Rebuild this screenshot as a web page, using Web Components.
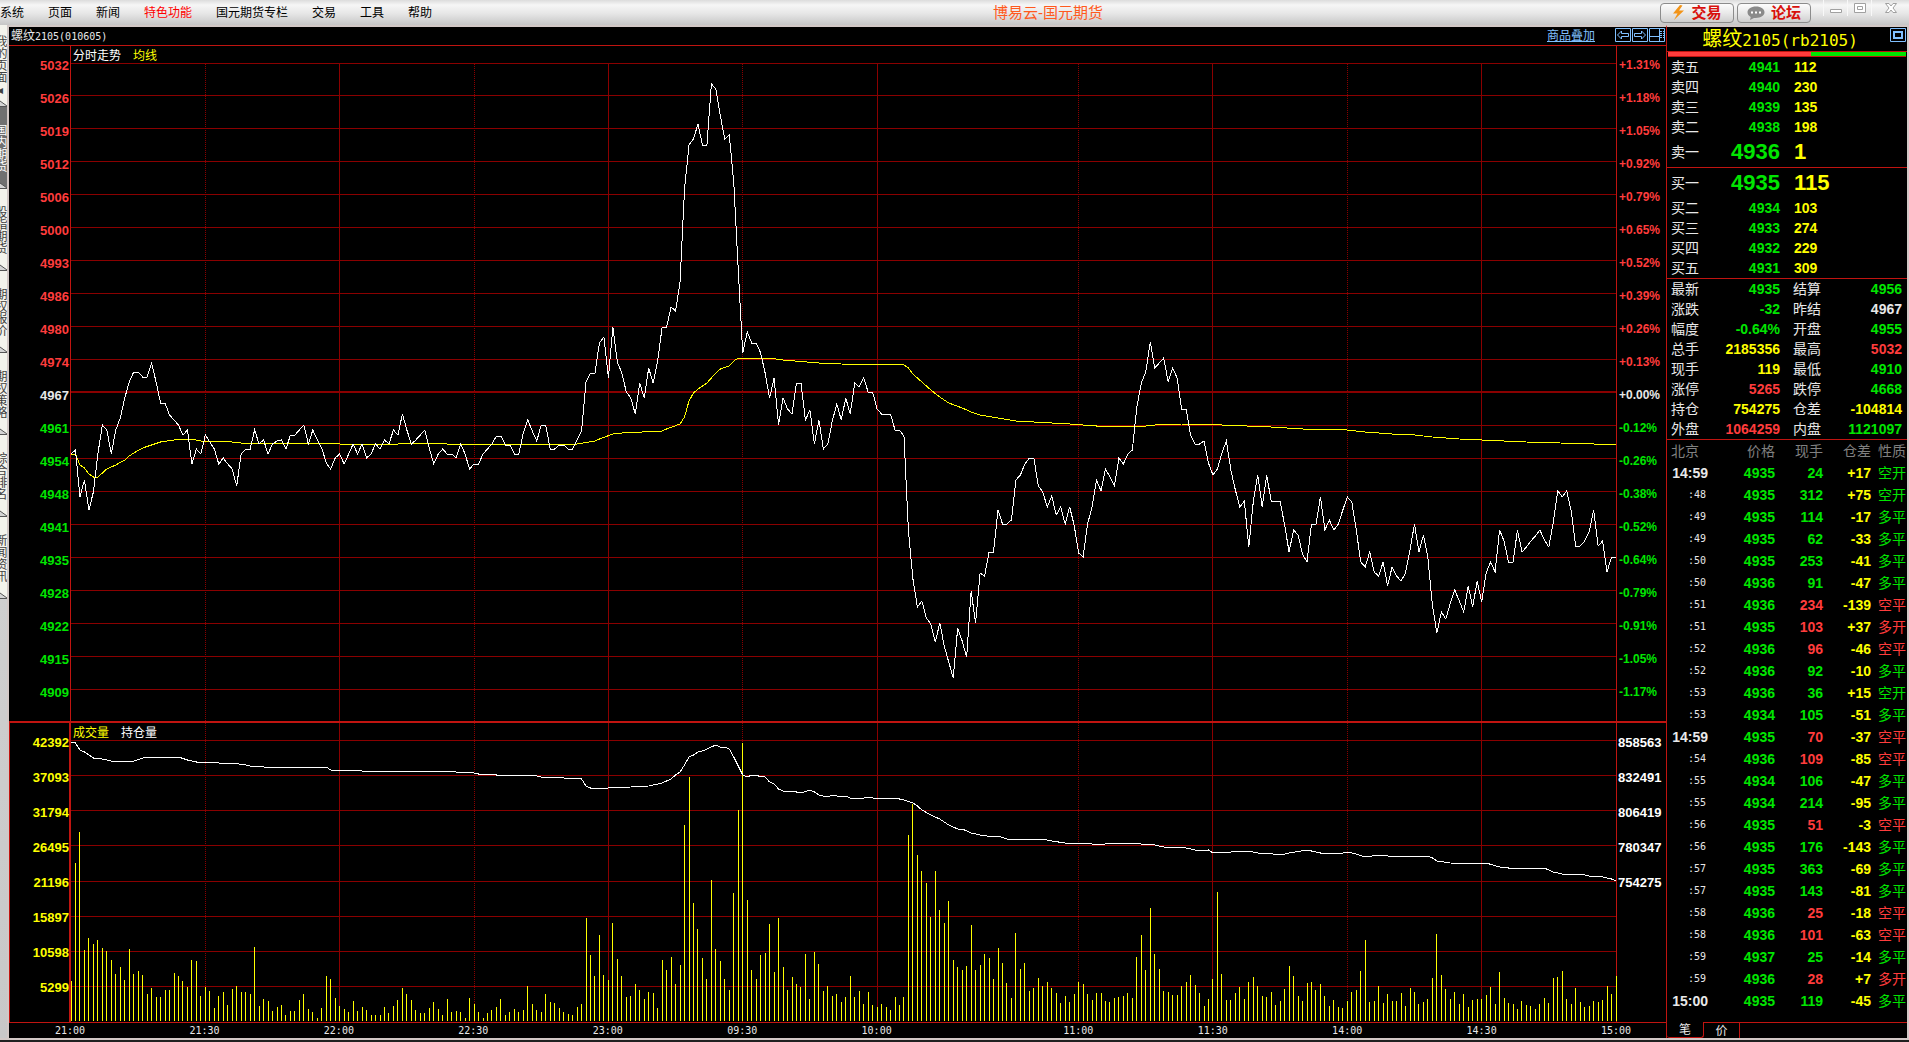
<!DOCTYPE html>
<html lang="zh-CN">
<head>
<meta charset="utf-8">
<title>博易云-国元期货</title>
<style>
    html, body {
        margin: 0;
        background: #202020;
    }

    body {
        --frame: #d2c8c6;
        --axis: #c01410;
        --grid: #8a0000;
        --up: #ff3c3c;
        --down: #00e600;
        --vol: #ffff00;
        --text: #e8e8e8;
        --link: #80c0ff;
        --mono: "DejaVu Sans Mono", "Noto Sans CJK SC", monospace;
        font: 12px/14px "Liberation Sans", "Noto Sans CJK SC", sans-serif;
        color: var(--text);
    }
</style>
</head>
<body>

<trade-terminal></trade-terminal>

<script>
const MENU = ["系统", "页面", "新闻", "特色功能", "国元期货专栏", "交易", "工具", "帮助"];

const PAGES = ["我的页面◂", "国内期货", "股指期货", "期权报价", "期权策略", "综合排名", "新闻资讯"];

const PRICE_LEVELS = [
    ["5032", "+1.31%"], ["5026", "+1.18%"], ["5019", "+1.05%"], ["5012", "+0.92%"], ["5006", "+0.79%"],
    ["5000", "+0.65%"], ["4993", "+0.52%"], ["4986", "+0.39%"], ["4980", "+0.26%"], ["4974", "+0.13%"],
    ["4967", "+0.00%"], ["4961", "-0.12%"], ["4954", "-0.26%"], ["4948", "-0.38%"], ["4941", "-0.52%"],
    ["4935", "-0.64%"], ["4928", "-0.79%"], ["4922", "-0.91%"], ["4915", "-1.05%"], ["4909", "-1.17%"]
];
const PRICE_GRID = [63, 95, 128, 161, 194, 227, 260, 293, 326, 359, 391, 425, 458, 491, 524, 557, 590, 623, 656, 689];

const VOLUME_LEVELS = ["42392", "37093", "31794", "26495", "21196", "15897", "10598", "5299"];
const INTEREST_LEVELS = ["858563", "832491", "806419", "780347", "754275"];
const VOLUME_GRID = [740, 775, 810, 845, 881, 916, 951, 986];

// trading minute of each time label
const TIMES = [
    ["21:00", 0], ["21:30", 30], ["22:00", 60], ["22:30", 90], ["23:00", 120], ["09:30", 150],
    ["10:00", 180], ["11:00", 225], ["11:30", 255], ["14:00", 285], ["14:30", 315], ["15:00", 345]
];
const DOTTED = ["21:30", "22:30", "09:30", "11:00", "14:00"];

// one value for each trading minute
const PRICE = [
    454, 450, 497, 480, 510, 492, 454, 425, 430, 454, 430, 418, 398, 382, 372, 372, 377, 377, 363, 382,
    403, 403, 415, 420, 425, 435, 430, 464, 449, 454, 435, 442, 449, 464, 458, 464, 469, 486, 454, 449,
    449, 430, 444, 440, 454, 444, 441, 440, 449, 435, 435, 430, 425, 444, 430, 440, 448, 463, 469, 458,
    454, 464, 454, 444, 454, 444, 458, 454, 444, 449, 440, 444, 430, 435, 414, 430, 444, 440, 435, 430,
    448, 464, 454, 449, 454, 454, 458, 444, 454, 469, 464, 464, 454, 449, 444, 436, 436, 445, 445, 454,
    454, 433, 420, 431, 441, 425, 425, 449, 449, 445, 445, 449, 449, 440, 431, 382, 373, 373, 343, 337,
    378, 327, 362, 373, 392, 398, 414, 383, 398, 368, 383, 361, 327, 327, 307, 311, 282, 189, 145, 139,
    124, 145, 145, 84, 89, 116, 139, 135, 183, 270, 353, 332, 343, 343, 353, 373, 398, 378, 425, 398,
    409, 414, 383, 383, 420, 410, 444, 420, 449, 444, 421, 404, 420, 398, 414, 383, 387, 378, 392, 392,
    409, 414, 414, 414, 430, 430, 436, 531, 579, 607, 601, 618, 624, 642, 623, 646, 662, 678, 628, 641,
    657, 591, 623, 573, 576, 552, 552, 510, 524, 524, 520, 480, 475, 464, 458, 458, 486, 492, 507, 496,
    515, 507, 524, 507, 525, 553, 557, 524, 507, 480, 491, 469, 477, 486, 458, 464, 454, 450, 407, 383,
    372, 342, 368, 363, 358, 382, 368, 378, 409, 409, 435, 444, 444, 441, 463, 475, 469, 453, 441, 470,
    490, 507, 501, 547, 502, 475, 507, 475, 501, 501, 501, 525, 552, 530, 535, 554, 562, 524, 524, 497,
    530, 520, 530, 524, 510, 497, 502, 530, 562, 567, 552, 572, 576, 562, 586, 567, 576, 581, 573, 550,
    524, 552, 535, 558, 605, 633, 612, 619, 603, 590, 601, 612, 586, 607, 581, 602, 573, 562, 572, 530,
    541, 562, 562, 530, 552, 547, 541, 536, 530, 540, 547, 522, 491, 497, 491, 511, 546, 546, 541, 532,
    510, 546, 541, 572, 557, 557
];

const VOLUME = [
    40, 158, 189, 71, 83, 77, 81, 73, 70, 61, 47, 54, 41, 72, 47, 50, 46, 27, 33, 24,
    24, 31, 31, 48, 45, 40, 34, 61, 60, 25, 34, 30, 13, 25, 29, 16, 32, 35, 29, 29,
    27, 74, 15, 22, 20, 10, 14, 16, 6, 10, 10, 21, 27, 12, 9, 3, 13, 45, 42, 23,
    15, 12, 9, 20, 10, 14, 11, 6, 6, 6, 14, 8, 15, 21, 33, 27, 21, 11, 8, 8,
    13, 19, 12, 6, 22, 9, 10, 9, 3, 23, 17, 9, 3, 8, 11, 14, 22, 6, 9, 12,
    9, 11, 35, 17, 11, 9, 27, 19, 18, 13, 9, 7, 6, 14, 17, 103, 66, 45, 86, 46,
    41, 98, 62, 45, 24, 25, 37, 31, 22, 29, 28, 13, 61, 51, 64, 37, 56, 196, 244, 118,
    92, 63, 42, 141, 72, 60, 42, 31, 128, 211, 278, 121, 51, 42, 66, 68, 97, 49, 103, 54,
    31, 44, 37, 34, 67, 22, 69, 57, 30, 35, 25, 27, 19, 24, 45, 24, 30, 17, 29, 16,
    14, 17, 14, 11, 24, 16, 24, 186, 217, 166, 150, 138, 104, 150, 111, 98, 120, 61, 54, 51,
    55, 96, 51, 56, 67, 63, 42, 73, 58, 38, 23, 88, 52, 58, 30, 33, 43, 35, 39, 33,
    28, 18, 25, 19, 27, 39, 37, 27, 21, 28, 28, 20, 19, 23, 24, 25, 28, 23, 64, 86,
    51, 113, 67, 52, 30, 29, 26, 26, 35, 39, 46, 36, 28, 15, 22, 42, 129, 47, 21, 21,
    28, 34, 22, 39, 44, 35, 25, 24, 29, 16, 20, 32, 55, 45, 25, 20, 38, 39, 31, 37,
    25, 15, 21, 14, 13, 20, 29, 31, 50, 81, 19, 20, 35, 18, 27, 20, 20, 28, 15, 33,
    29, 17, 19, 22, 43, 87, 46, 32, 22, 29, 17, 27, 14, 21, 22, 22, 26, 34, 17, 49,
    23, 18, 17, 12, 20, 16, 15, 12, 17, 23, 18, 43, 44, 50, 22, 17, 33, 19, 14, 15,
    20, 19, 21, 35, 27, 45
];

// minute,level pairs
const AVERAGE = `0,454 1,454 2,465 3,468 4,474 5,477 6,477 7,473 8,469 10,465 12,460 13,456 14,453 16,448 18,445
    20,442 23,440 27,439 29,441 36,442 38,443 57,443 60,444 73,444 78,443 83,443 84,444 113,444 117,441 118,439
    121,434 123,433 132,431 133,429 136,424 137,417 138,401 139,393 140,389 141,386 142,383 143,378 144,373
    145,369 147,366 148,361 149,358 156,358 159,360 167,363 172,364 186,365 187,368 188,374 190,382 192,390
    194,397 196,403 199,408 201,412 203,415 207,418 211,421 215,422 223,424 229,426 240,426 242,425 248,424
    256,424 257,425 268,427 275,429 285,430 289,432 295,434 300,435 304,437 310,439 315,440 325,442 340,444 345,445`;

const INTEREST = `0,742 1,743 2,750 3,752 4,755 5,758 7,759 10,762 14,761 16,758 17,757 24,757 26,760 28,762 32,762
    33,763 36,763 39,765 40,766 43,767 45,768 46,767 57,767 58,770 64,770 65,771 81,771 82,772 83,771 85,771
    86,772 89,772 91,774 94,774 95,775 98,775 99,776 100,775 104,776 105,777 107,778 108,777 110,778 114,779
    115,786 116,788 118,788 119,788 120,788 125,787 129,786 132,783 134,779 135,775 136,772 137,765 138,757
    139,755 140,752 141,751 142,749 144,745 145,747 146,747 147,749 148,757 149,766 150,775 151,777 152,775
    155,777 156,782 157,784 158,789 159,791 162,792 163,793 165,790 166,792 167,795 169,797 170,795 172,797
    173,796 174,798 177,798 178,797 179,798 184,798 186,800 188,803 189,806 190,810 192,815 194,819 196,825
    198,829 199,829 201,833 203,835 206,837 207,836 209,839 212,840 213,839 217,839 219,841 222,843 225,843
    228,844 231,844 234,843 237,843 239,844 241,844 244,847 248,847 251,850 253,851 254,850 255,853 256,852
    259,852 260,851 262,852 263,851 265,853 267,853 270,855 272,853 276,850 278,852 280,854 282,853 284,853
    285,852 287,854 289,857 292,855 296,857 301,856 303,856 304,858 305,861 308,863 312,864 313,863 316,863
    319,867 321,868 329,868 331,872 334,875 337,874 339,876 342,877 344,879 345,881`;

const ASKS = [["卖五", 4941, 112], ["卖四", 4940, 230], ["卖三", 4939, 135], ["卖二", 4938, 198], ["卖一", 4936, 1]];
const BIDS = [["买一", 4935, 115], ["买二", 4934, 103], ["买三", 4933, 274], ["买四", 4932, 229], ["买五", 4931, 309]];

const STATS = [
    ["最新", "4935", "down", "结算", "4956", "down"],
    ["涨跌", "-32", "down", "昨结", "4967", "flat"],
    ["幅度", "-0.64%", "down", "开盘", "4955", "down"],
    ["总手", "2185356", "vol", "最高", "5032", "up"],
    ["现手", "119", "vol", "最低", "4910", "down"],
    ["涨停", "5265", "up", "跌停", "4668", "down"],
    ["持仓", "754275", "vol", "仓差", "-104814", "vol"],
    ["外盘", "1064259", "up", "内盘", "1121097", "down"]
];

const TICKS = [
    ["14:59", 4935, 24, "+17", "空开", "down"], [":48", 4935, 312, "+75", "空开", "down"],
    [":49", 4935, 114, "-17", "多平", "down"], [":49", 4935, 62, "-33", "多平", "down"],
    [":50", 4935, 253, "-41", "多平", "down"], [":50", 4936, 91, "-47", "多平", "down"],
    [":51", 4936, 234, "-139", "空平", "up"], [":51", 4935, 103, "+37", "多开", "up"],
    [":52", 4936, 96, "-46", "空平", "up"], [":52", 4936, 92, "-10", "多平", "down"],
    [":53", 4936, 36, "+15", "空开", "down"], [":53", 4934, 105, "-51", "多平", "down"],
    ["14:59", 4935, 70, "-37", "空平", "up"], [":54", 4936, 109, "-85", "空平", "up"],
    [":55", 4934, 106, "-47", "多平", "down"], [":55", 4934, 214, "-95", "多平", "down"],
    [":56", 4935, 51, "-3", "空平", "up"], [":56", 4935, 176, "-143", "多平", "down"],
    [":57", 4935, 363, "-69", "多平", "down"], [":57", 4935, 143, "-81", "多平", "down"],
    [":58", 4936, 25, "-18", "空平", "up"], [":58", 4936, 101, "-63", "空平", "up"],
    [":59", 4937, 25, "-14", "多平", "down"], [":59", 4936, 28, "+7", "多开", "up"],
    ["15:00", 4935, 119, "-45", "多平", "down"]
];

const COLORS = `
    .up { color: var(--up); }
    .down { color: var(--down); }
    .vol { color: var(--vol); }
    .flat { color: var(--text); }
`;

class MenuBar extends HTMLElement {

    constructor() {
        super();
        this.attachShadow({mode: "open"}).innerHTML = `
            <style>
                :host {
                    display: flex;
                    align-items: center;
                    height: 25px;
                    background: linear-gradient(#dcdcdc, #f6f6f6 20%, #e6e6e6 55%, #c6c6c6);
                    color: #000;
                }

                nav {
                    display: flex;
                    gap: 24px;
                    padding: 1px 4px 0 0;
                }

                button {
                    font: inherit;
                    color: inherit;
                    background: none;
                    border: 0;
                    padding: 0;
                }

                .hot {
                    color: #ff0000;
                }

                h1 {
                    flex: 1;
                    margin: 0;
                    text-align: center;
                    font-size: 15px;
                    font-weight: normal;
                    line-height: 24px;
                    color: #ff5a1e;
                }

                .actions {
                    display: flex;
                    gap: 3px;
                    margin-right: 12px;
                }

                .actions button {
                    display: flex;
                    align-items: center;
                    justify-content: center;
                    gap: 6px;
                    width: 74px;
                    height: 20px;
                    border: 1px solid #8c8c8c;
                    border-radius: 4px;
                    background: linear-gradient(#fdfdfd, #e9e9e9 50%, #cfcfcf);
                    color: #d8100c;
                    font-size: 15px;
                    font-weight: bold;
                    line-height: 18px;
                }

                .window {
                    display: flex;
                    align-self: flex-start;
                }

                .window button {
                    width: 24px;
                    height: 16px;
                    border-left: 1px solid #f8f8f8;
                }

                .window button:last-child {
                    width: 38px;
                }

                svg {
                    display: block;
                    margin: auto;
                }
            </style>
            <nav>${MENU.map(item => `<button class="${item === "特色功能" ? "hot" : ""}">${item}</button>`).join("")}</nav>
            <h1>博易云-国元期货</h1>
            <div class="actions">
                <button>
                    <svg width="13" height="15" viewBox="0 0 13 15" style="margin:0"><path d="M8 0 1 8.500 5.500 8.500 2 15 12 5.500 7 5.500 10.500 .500z" fill="#f29418"/></svg>
                    交易
                </button>
                <button>
                    <svg width="18" height="14" viewBox="0 0 18 14" style="margin:0">
                        <path d="M9 0.500C4 .500.500 3 .500 6.300c0 2 1.300 3.600 3.200 4.600L3 14l4-2.100c6 .6 10.500-1.900 10.500-5.600C17.500 3 14 .500 9 .500z" fill="#8a8a8a"/>
                        <path d="M4 5.500h2v2H4zM8 5.500h2v2H8zM12 5.500h2v2h-2z" fill="#fff"/>
                    </svg>
                    论坛
                </button>
            </div>
            <div class="window">
                <button aria-label="最小化"><svg width="14" height="12"><path d="M1.500 7.500h11v3h-11z" fill="#fff" stroke="#a0a0a0"/></svg></button>
                <button aria-label="还原"><svg width="14" height="12"><path d="M1.500 1.500h11v9h-11zM4.500 4.500h5v3h-5z" fill="#fff" stroke="#a0a0a0"/></svg></button>
                <button aria-label="关闭"><svg width="14" height="12"><path d="M1.500 1.500h3.500l2 2.500 2-2.500h3.500L9 6l3.500 4.500H9L7 8l-2 2.500H1.500L5 6z" fill="#fff" stroke="#a0a0a0"/></svg></button>
            </div>
        `;
    }
}

class PageTabs extends HTMLElement {

    constructor() {
        super();
        this.attachShadow({mode: "open"}).innerHTML = `
            <style>
                :host {
                    display: block;
                    width: 7px;
                    overflow: hidden;
                    border-right: 2px solid var(--frame);
                    background: linear-gradient(#d8d8d8, #c8c8c8);
                }

                button {
                    display: flex;
                    align-items: center;
                    justify-content: flex-end;
                    position: relative;
                    width: 7px;
                    height: 82px;
                    padding: 0 1px 0 0;
                    border: 0;
                    background: #f3f3ec;
                    color: #404040;
                    font: inherit;
                    line-height: 12px;
                }

                button.active {
                    background: #707070;
                    color: #fff;
                }

                span {
                    flex: none;
                    writing-mode: vertical-rl;
                }

                svg {
                    position: absolute;
                    left: 0;
                    bottom: 0;
                }
            </style>
            ${PAGES.map(page => `
                <button class="${page === "国内期货" ? "active" : ""}">
                    <span>${page}</span>
                    <svg width="7" height="7"><path d="M0 1 7 6v1H0z" fill="#d4d4d4"/><path d="M0 1 7 6M0 6.500h7" fill="none" stroke="#555"/></svg>
                </button>
            `).join("")}
        `;
    }
}

class IntradayChart extends HTMLElement {

    constructor() {
        super();
        this.attachShadow({mode: "open"});
        this.render();
    }

    verticals(top, bottom) {
        return TIMES.slice(1, -1).map(([time, minute]) => `
            <path class="grid ${DOTTED.includes(time) ? "dotted" : ""}" d="M${minute} ${top}V${bottom}"/>
        `).join("");
    }

    levelClass(index) {
        return index < 10 ? "up" : index === 10 ? "flat" : "down";
    }

    render() {
        const prices = PRICE.map((level, minute) => `${minute},${level}`).join(" ");
        const bars = VOLUME.map((height, minute) => `M${minute} 1021v-${height}`).join("");

        this.shadowRoot.innerHTML = `
            <style>
                ${COLORS}

                :host {
                    display: block;
                    min-width: 0;
                    background: #000;
                    border-top: 2px solid var(--frame);
                }

                header {
                    display: flex;
                    align-items: center;
                    height: 18px;
                    padding-left: 2px;
                    border-bottom: 1px solid var(--axis);
                }

                header b {
                    flex: 1;
                    font-weight: normal;
                }

                .mono {
                    font-family: var(--mono);
                    font-size: 10px;
                }

                a {
                    color: var(--link);
                    margin-right: 20px;
                }

                header button {
                    width: 17px;
                    height: 14px;
                    padding: 0;
                    border: 0;
                    background: none;
                }

                header svg {
                    display: block;
                    fill: none;
                    stroke: var(--link);
                }

                .tools {
                    display: flex;
                    align-self: flex-start;
                    padding: 1px 0 0;
                }

                .pane {
                    display: grid;
                    grid-template-columns: 61px minmax(0, 1fr) 49px;
                }

                .volume {
                    border-top: 2px solid var(--axis);
                    border-bottom: 1px solid var(--axis);
                }

                .labels {
                    padding-top: 3px;
                    font-weight: bold;
                    font-size: 13px;
                    line-height: 33px;
                }

                .volume .labels {
                    padding-top: 2px;
                    line-height: 35px;
                }

                .left {
                    text-align: right;
                    padding-right: 1px;
                }

                .volume .left {
                    border: solid var(--axis);
                    border-width: 0 1px;
                    padding-right: 0;
                }

                .right {
                    padding-left: 2px;
                }

                .price .right {
                    font-size: 12px;
                }

                .volume .right {
                    padding-left: 1px;
                    color: #fff;
                }

                .plot {
                    position: relative;
                    border: solid var(--axis);
                    border-width: 0 1px;
                }

                .plot svg {
                    display: block;
                    width: 100%;
                    overflow: visible;
                    fill: none;
                    shape-rendering: crispEdges;
                }

                .plot path, polyline {
                    vector-effect: non-scaling-stroke;
                }

                .grid { stroke: var(--grid); }
                .dotted { stroke-dasharray: 1 1; }
                .thick { stroke-width: 2; }
                .white { stroke: #fff; }
                .yellow { stroke: var(--vol); }

                .legend {
                    position: absolute;
                    left: 2px;
                    top: 3px;
                    display: flex;
                    gap: 12px;
                    color: #fff;
                }

                .legend .vol {
                    color: var(--vol);
                }

                .times {
                    display: flex;
                    height: 15px;
                    margin: 0 50px 0 61px;
                    line-height: 15px;
                }

                .times span {
                    display: flex;
                    justify-content: flex-end;
                    flex-basis: 0;
                }

                .times i {
                    display: flex;
                    justify-content: center;
                    width: 0;
                    font-style: normal;
                }
            </style>

            <header>
                <b>螺纹<span class="mono">2105(010605)</span></b>
                <a href="#">商品叠加</a>
                <div class="tools">
                    <button aria-label="后退"><svg width="16" height="14"><path d="M.500.500h15v13H.500zM2.500 7l4-4v2.500h7v3h-7V11z"/></svg></button>
                    <button aria-label="前进"><svg width="16" height="14"><path d="M.500.500h15v13H.500zM13.500 7l-4-4v2.500h-7v3h7V11z"/></svg></button>
                    <button aria-label="布局"><svg width="16" height="14"><path d="M.500.500h15v13H.500zM.500 8.500h10M10.500.500v13"/><path d="M11 3.500h4M11 5.500h4M11 7.500h4M11 9.500h4" stroke-dasharray="2 1"/></svg></button>
                </div>
            </header>

            <section class="pane price">
                <div class="labels left">${PRICE_LEVELS.map((row, i) => `<div class="${this.levelClass(i)}">${row[0]}</div>`).join("")}</div>
                <div class="plot">
                    <svg height="675" viewBox="0 46 345 675" preserveAspectRatio="none">
                        ${PRICE_GRID.map((y, i) => `<path class="grid ${i === 10 ? "thick" : ""}" d="M0 ${i === 10 ? 392 : y + .5}H345"/>`).join("")}
                        ${this.verticals(64, 721)}
                        <polyline class="yellow" points="${AVERAGE}"/>
                        <polyline class="white" points="${prices}"/>
                    </svg>
                    <div class="legend"><span>分时走势</span><span class="vol">均线</span></div>
                </div>
                <div class="labels right">${PRICE_LEVELS.map((row, i) => `<div class="${this.levelClass(i)}">${row[1]}</div>`).join("")}</div>
            </section>

            <section class="pane volume">
                <div class="labels left vol">${VOLUME_LEVELS.map(level => `<div>${level}</div>`).join("")}</div>
                <div class="plot">
                    <svg height="299" viewBox="0 723 345 299" preserveAspectRatio="none">
                        ${VOLUME_GRID.map(y => `<path class="grid" d="M0 ${y + .5}H345"/>`).join("")}
                        ${this.verticals(723, 1022)}
                        <path class="yellow" d="${bars}"/>
                        <polyline class="white" points="${INTEREST}"/>
                    </svg>
                    <div class="legend"><span class="vol">成交量</span><span>持仓量</span></div>
                </div>
                <div class="labels right">${INTEREST_LEVELS.map(level => `<div>${level}</div>`).join("")}</div>
            </section>

            <div class="times mono">
                ${TIMES.map(([time, minute], i) => `<span style="flex-grow:${i ? minute - TIMES[i - 1][1] : 0}"><i>${time}</i></span>`).join("")}
            </div>
        `;
    }
}

class OrderBook extends HTMLElement {

    constructor() {
        super();
        const row = ([label, price, amount]) => `
            <tr class="${label.endsWith("一") ? "best" : ""}"><th>${label}</th><td class="down">${price}</td><td class="vol">${amount}</td></tr>
        `;
        this.attachShadow({mode: "open"}).innerHTML = `
            <style>
                ${COLORS}

                :host {
                    display: block;
                }

                .ratio {
                    display: flex;
                    height: 4px;
                    margin: 0 1px;
                    background: var(--down);
                }

                .ratio::before {
                    content: "";
                    width: 60%;
                    background: var(--up);
                }

                .ratio, table {
                    border-bottom: 1px solid var(--axis);
                }

                table {
                    width: 100%;
                    table-layout: fixed;
                    border-collapse: separate;
                    border-spacing: 0;
                    font-size: 14px;
                    line-height: 20px;
                }

                tr { height: 20px; }
                tr.best { height: 30px; }

                th, td {
                    padding: 0;
                    font-weight: normal;
                    text-align: left;
                }

                th {
                    width: 33px;
                    padding-left: 4px;
                }

                td {
                    font-weight: bold;
                    padding-left: 14px;
                }

                td.down {
                    width: 76px;
                    padding-left: 0;
                    text-align: right;
                }

                .best td {
                    font-size: 22px;
                }
            </style>
            <div class="ratio"></div>
            <table>${ASKS.map(row).join("")}</table>
            <table>${BIDS.map(row).join("")}</table>
        `;
    }
}

class QuoteStats extends HTMLElement {

    constructor() {
        super();
        this.attachShadow({mode: "open"}).innerHTML = `
            <style>
                ${COLORS}

                :host {
                    display: block;
                    border-bottom: 1px solid var(--axis);
                }

                dl {
                    display: grid;
                    grid-template-columns: 33px 76px 46px 1fr;
                    margin: 0;
                    padding: 0 5px 0 4px;
                    font-size: 14px;
                    line-height: 20px;
                }

                dd {
                    margin: 0;
                    font-weight: bold;
                    text-align: right;
                }

                dt:nth-of-type(even) {
                    padding-left: 13px;
                }
            </style>
            <dl>${STATS.map(([a, x, ax, b, y, by]) => `
                <dt>${a}</dt><dd class="${ax}">${x}</dd><dt>${b}</dt><dd class="${by}">${y}</dd>
            `).join("")}</dl>
        `;
    }
}

class TickList extends HTMLElement {

    constructor() {
        super();
        this.attachShadow({mode: "open"}).innerHTML = `
            <style>
                ${COLORS}

                :host {
                    display: block;
                    flex: 1;
                }

                table {
                    width: 100%;
                    table-layout: fixed;
                    border-spacing: 0;
                    font-size: 14px;
                    line-height: 22px;
                    text-align: right;
                }

                th, td {
                    padding: 0;
                    white-space: nowrap;
                }

                th {
                    font-weight: normal;
                    color: #808080;
                }

                th:first-child {
                    width: 41px;
                    text-align: left;
                    text-indent: 4px;
                }

                th:nth-child(3), th:nth-child(4) { width: 48px; }
                th:nth-child(5) { width: 35px; }

                th:last-child, td:last-child {
                    padding-right: 1px;
                }

                td {
                    font-weight: bold;
                }

                td:last-child {
                    font-weight: normal;
                }

                td.second {
                    padding-right: 2px;
                    font-family: var(--mono);
                    font-size: 10px;
                    font-weight: normal;
                }
            </style>
            <table>
                <thead><tr><th>北京</th><th>价格</th><th>现手</th><th>仓差</th><th>性质</th></tr></thead>
                <tbody>${TICKS.map(([time, price, hand, diff, kind, side]) => `
                    <tr>
                        <td class="${time.startsWith(":") ? "second" : ""}">${time}</td>
                        <td class="down">${price}</td>
                        <td class="${side}">${hand}</td>
                        <td class="vol">${diff}</td>
                        <td class="${side}">${kind}</td>
                    </tr>
                `).join("")}</tbody>
            </table>
        `;
    }
}

class QuotePanel extends HTMLElement {

    constructor() {
        super();
        this.attachShadow({mode: "open"}).innerHTML = `
            <style>
                :host {
                    display: flex;
                    flex-direction: column;
                    background: #000;
                    border-top: 2px solid var(--frame);
                    border-left: 1px solid var(--axis);
                    border-right: 2px solid var(--frame);
                }

                header {
                    display: flex;
                    height: 24px;
                    border-bottom: 1px solid var(--axis);
                }

                h2 {
                    flex: 1;
                    margin: 0 0 0 3px;
                    text-align: center;
                    font-size: 20px;
                    font-weight: normal;
                    line-height: 24px;
                    color: var(--vol);
                }

                h2 span {
                    font-family: var(--mono);
                    font-size: 16px;
                }

                button {
                    padding: 0;
                    border: 0;
                    background: none;
                    font: inherit;
                    color: inherit;
                }

                header button {
                    align-self: flex-start;
                    padding: 1px 1px 0 0;
                }

                svg {
                    display: block;
                    fill: none;
                    stroke: var(--link);
                }

                footer {
                    display: flex;
                    height: 16px;
                }

                footer button {
                    box-sizing: border-box;
                    width: 37px;
                    border-top: 1px solid var(--axis);
                }

                footer button:first-child {
                    border: solid var(--axis);
                    border-width: 0 1px 1px 0;
                    border-radius: 0 0 3px 3px;
                }

                footer button:last-of-type {
                    width: 36px;
                    border-right: 1px solid var(--axis);
                }

                footer::after {
                    content: "";
                    flex: 1;
                    border-top: 1px solid var(--axis);
                }
            </style>
            <header>
                <h2>螺纹<span>2105(rb2105)</span></h2>
                <button aria-label="窗口"><svg width="16" height="14"><path d="M.500.500h15v13H.500z"/><path d="M4 4h8v6H4z" stroke-width="2"/></svg></button>
            </header>
            <slot></slot>
            <footer><button>笔</button><button>价</button></footer>
        `;
    }
}

class TradeTerminal extends HTMLElement {

    constructor() {
        super();
        this.attachShadow({mode: "open"}).innerHTML = `
            <style>
                :host {
                    display: block;
                    border-bottom: 2px solid #202020;
                }

                main {
                    display: grid;
                    grid-template-columns: auto minmax(0, 1fr) 243px;
                    border-bottom: 2px solid var(--frame);
                }

                quote-panel {
                    box-sizing: border-box;
                }
            </style>
            <menu-bar></menu-bar>
            <main>
                <page-tabs></page-tabs>
                <intraday-chart></intraday-chart>
                <quote-panel>
                    <order-book></order-book>
                    <quote-stats></quote-stats>
                    <tick-list></tick-list>
                </quote-panel>
            </main>
        `;
    }
}

customElements.define("menu-bar", MenuBar);
customElements.define("page-tabs", PageTabs);
customElements.define("intraday-chart", IntradayChart);
customElements.define("order-book", OrderBook);
customElements.define("quote-stats", QuoteStats);
customElements.define("tick-list", TickList);
customElements.define("quote-panel", QuotePanel);
customElements.define("trade-terminal", TradeTerminal);
</script>
</body>
</html>
